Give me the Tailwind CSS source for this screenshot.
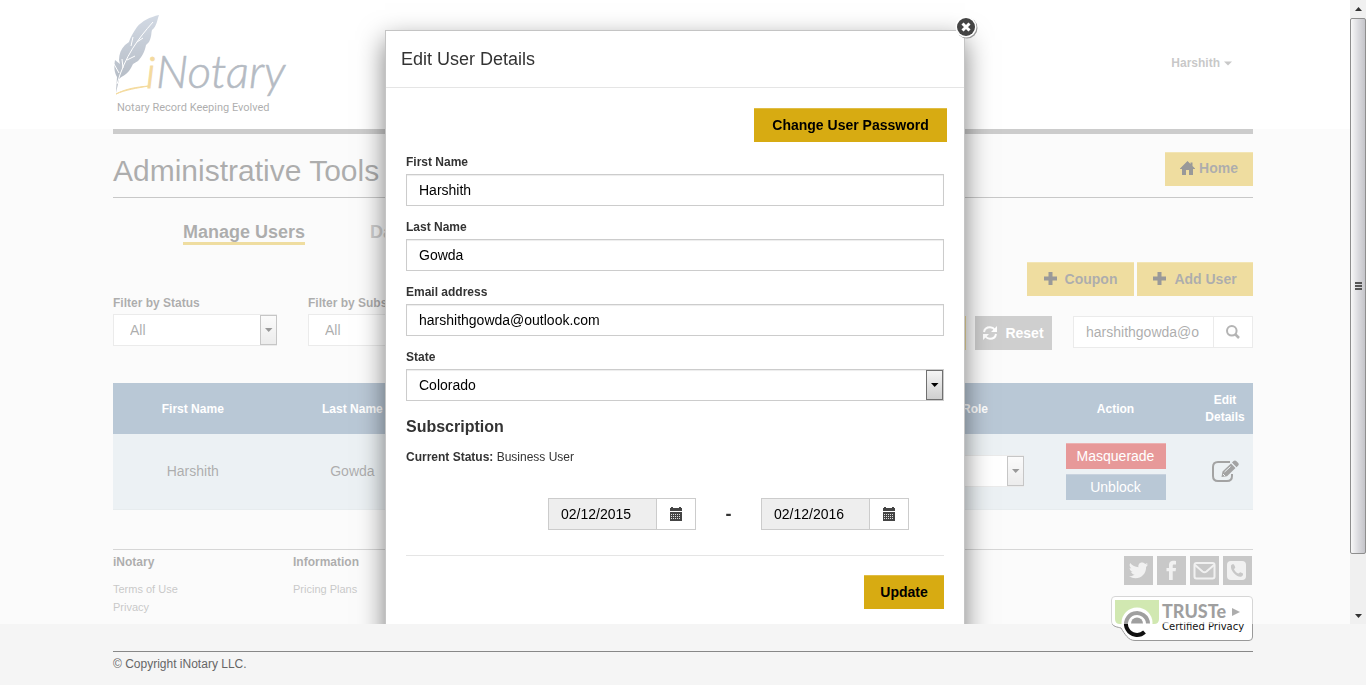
<!DOCTYPE html>
<html lang="en">
<head>
<meta charset="utf-8">
<meta name="viewport" content="width=device-width, initial-scale=1">
<title>iNotary - Administrative Tools</title>
<script src="https://cdn.jsdelivr.net/npm/@tailwindcss/browser@4"></script>
</head>
<body class="min-h-screen bg-[#f5f5f5] font-['Liberation_Sans',Arial,sans-serif] text-sm text-[#333333]">

<header class="bg-white">
  <div class="mx-auto flex h-[129px] max-w-[1140px] items-start justify-between">
    <a href="#" aria-label="iNotary" class="block">
      <svg width="176" height="120" viewBox="0 0 176 120">
        <defs>
          <linearGradient id="quill" x1="0" y1="0" x2="0" y2="1"><stop offset="0" stop-color="#8fa1bb"/><stop offset="1" stop-color="#3c4c63"/></linearGradient>
        </defs>
        <path d="M46 15C37 17 29 21 24 27C20 33 17 38 16 42L12 45C8 49 6 54 6 60L7 64L2 60C1 66 1 72 4 77L3 93L6 79C9 76 13 75 16 71C18 68 19 66 20 64L25 61C30 56 32 50 33 45L36 42C39 36 38 33 39 30C44 26 44 20 46 15Z" fill="url(#quill)"/>
        <path d="M40 22C25 39 12 56 4 84M20 37L18 46M9 59L10 68M30 38L24 42M22 56L14 60M1 64L6 73" fill="none" stroke="#fff" stroke-width="1"/>
        <path d="M3 94C12 89 23 87 36 86C24 88 12 90 3 94Z" fill="#e4a40c" stroke="#e4a40c"/>
        <text x="33" y="88" font-family="Lato, sans-serif" font-size="44" font-weight="300" font-style="italic" fill="#e4a40c" stroke="#e4a40c">i</text>
        <text x="43" y="88" font-family="Lato, sans-serif" font-size="46" font-weight="300" font-style="italic" fill="#475569" stroke="#475569" stroke-width="0.6">Notary</text>
        <text x="4" y="111" font-family="Roboto, sans-serif" font-size="11" fill="#333">Notary Record Keeping Evolved</text>
      </svg>
    </a>
    <a href="#" class="mt-[55px] mr-5 flex items-center gap-1 text-xs font-bold text-[#767676]">Harshith
      <svg width="9" height="5" viewBox="0 0 9 5"><path d="M0 0.500H8L4 4.500Z" fill="#767676"/></svg>
    </a>
  </div>
</header>

<main class="mx-auto max-w-[1140px] border-t-5 border-[#808080]">
  <div class="flex h-16 items-center justify-between border-b border-[#777777]">
    <h1 class="mt-[10px] text-3xl">Administrative Tools</h1>
    <button class="mt-[6px] flex h-[34px] w-[88px] items-center justify-center gap-1 border-t border-[#e0bd45] bg-[#d7ab12] pb-0.5 text-sm font-bold">
      <svg width="15" height="14" viewBox="0 0 15 14"><path d="M7.500 0L15 7.500V8H13V14H9V9H6V14H2V8H0V7.500ZM10.500 1.500H12.500V5H10.500Z" fill="#000"/></svg>Home
    </button>
  </div>

  <nav class="flex gap-[65px] pt-6 pl-[70px] text-lg font-bold">
    <a href="#" class="h-[23px] border-b-3 border-[#d7ab12] leading-5">Manage Users</a>
    <a href="#" class="h-[23px] leading-5 text-[#888888]">Da</a>
  </nav>

  <div class="mt-[17px] flex justify-end gap-[3px]">
    <button class="flex h-[34px] w-[107px] items-center justify-center gap-2 border-t border-[#e0bd45] bg-[#d7ab12] pb-0.5 text-sm font-bold">
      <svg width="13" height="13" viewBox="0 0 13 13"><path d="M4.500 0H8.500V4.500H13V8.500H8.500V13H4.500V8.500H0V4.500H4.500Z" fill="#000"/></svg>Coupon
    </button>
    <button class="flex h-[34px] w-[116px] items-center justify-center gap-2 border-t border-[#e0bd45] bg-[#d7ab12] pb-0.5 text-sm font-bold">
      <svg width="13" height="13" viewBox="0 0 13 13"><path d="M4.500 0H8.500V4.500H13V8.500H8.500V13H4.500V8.500H0V4.500H4.500Z" fill="#000"/></svg>Add User
    </button>
  </div>

  <form class="flex h-[54px] items-end justify-between">
    <div class="mb-1 flex gap-[31px]">
      <div class="w-[164px]">
        <label for="fstatus" class="mb-[3px] block text-xs font-bold">Filter by Status</label>
        <div class="relative">
          <select id="fstatus" class="h-8 w-full appearance-none border border-[#cccccc] bg-white pl-4 text-sm text-[#333333]"><option>All</option></select>
          <span class="pointer-events-none absolute top-px right-0 flex h-[30px] w-[17px] items-center justify-center border border-[#707070] bg-linear-to-b from-[#f5f5f5] to-[#cfcfcf]"><svg width="8" height="4" viewBox="0 0 8 4"><path d="M0 0H7.500L3.700 4Z" fill="#000"/></svg></span>
        </div>
      </div>
      <div class="w-[164px]">
        <label for="fsub" class="mb-[3px] block text-xs font-bold">Filter by Subscription</label>
        <select id="fsub" class="h-8 w-full appearance-none border border-[#cccccc] bg-white pl-4 text-sm text-[#333333]"><option>All</option></select>
      </div>
    </div>
    <div class="flex items-start">
      <button class="mr-[9px] h-[34px] w-[60px] bg-[#d7ab12]" aria-label="Filter"></button>
      <button class="mr-[21px] flex h-[34px] w-[77px] items-center justify-center gap-2 bg-[#878787] text-sm font-bold text-white">
        <svg width="14" height="14" viewBox="0 0 14 14" fill="none" stroke="#fff" stroke-width="2"><path d="M1 6C1.500 3 4 1.300 7 1.300C9 1.300 10.500 2 12 4M13 8C12.500 11 10 12.700 7 12.700C5 12.700 3.500 12 2 10"/><path d="M14 0V6H8ZM0 14V8H6Z" fill="#fff" stroke="none"/></svg>Reset
      </button>
      <div class="flex">
        <input aria-label="Search" value="harshithgowda@o" class="h-8 w-[141px] border border-[#cccccc] bg-white px-3 text-sm">
        <button type="button" aria-label="Go" class="flex h-8 w-[39px] items-center justify-center border border-l-0 border-[#cccccc] bg-white"><svg width="14" height="14" viewBox="0 0 14 14" fill="none" stroke="#444" stroke-width="2"><circle cx="5.800" cy="5.800" r="4.800"/><path d="M9 9L13 13" stroke-width="2.500"/></svg></button>
      </div>
    </div>
  </form>

  <table class="mt-[33px] w-full table-fixed border-collapse text-center">
    <colgroup><col class="w-[14%]"><col class="w-[14%]"><col><col class="w-[118px]"><col class="w-[163px]"><col class="w-14"></colgroup>
    <thead class="bg-[#527598] text-xs text-white">
      <tr class="h-[51px]"><th>First Name</th><th>Last Name</th><th></th><th>Role</th><th>Action</th><th class="leading-[17px]">Edit Details</th></tr>
    </thead>
    <tbody>
      <tr class="h-[75px] border-b border-[#c4cfd4] bg-[#cfdce3]">
        <td>Harshith</td><td>Gowda</td><td></td>
        <td class="pr-[10px]"><div class="relative">
          <select aria-label="Role" class="block h-8 w-full appearance-none border border-[#cccccc] bg-white"><option></option></select>
          <span class="pointer-events-none absolute top-px right-0 flex h-[30px] w-[17px] items-center justify-center border border-[#707070] bg-linear-to-b from-[#f5f5f5] to-[#cfcfcf]"><svg width="8" height="4" viewBox="0 0 8 4"><path d="M0 0H7.500L3.700 4Z" fill="#000"/></svg></span>
        </div></td>
        <td><div class="flex flex-col items-center gap-[5px] text-white">
          <button class="h-[26px] w-[100px] border-t border-[#cf4040] bg-[#c20200] text-sm">Masquerade</button>
          <button class="h-[26px] w-[100px] border-t border-[#7590ac] bg-[#527598] text-sm">Unblock</button>
        </div></td>
        <td><button aria-label="Edit Details" class="mx-auto block"><svg width="27" height="23" viewBox="0 0 27 23"><path d="M18 2H6C3 2 1 4 1 7V16C1 19 3 21 6 21H15C18 21 20 19 20 16V14" fill="none" stroke="#1a1a1a" stroke-width="2"/><path d="M9.500 17L10.500 11.500L19 3.500L23.500 8L15 16.300ZM20 2.500L21.500 1C22.500 0.300 23.500 0.300 24.500 1.200L26 2.700C27 3.700 27 4.700 26 5.700L24.500 7.200Z" fill="#1a1a1a"/><path d="M12.500 12L18.500 6.500M11 14L13 16" stroke="#cfdce3"/></svg></button></td>
      </tr>
    </tbody>
  </table>
</main>

<footer class="mx-auto mt-[39px] max-w-[1140px]">
  <div class="flex h-[102px] justify-between border-t border-[#999999]">
    <div class="flex pt-[3px]">
      <div class="w-[180px]">
        <h2 class="mb-[9px] text-xs leading-[18px] font-bold">iNotary</h2>
        <ul class="text-[11px] leading-[18px] text-[#767676]"><li><a href="#">Terms of Use</a></li><li><a href="#">Privacy</a></li></ul>
      </div>
      <div>
        <h2 class="mb-[9px] text-xs leading-[18px] font-bold">Information</h2>
        <ul class="text-[11px] leading-[18px] text-[#767676]"><li><a href="#">Pricing Plans</a></li></ul>
      </div>
    </div>
    <div class="flex flex-col items-end pt-[6px]">
      <div class="flex gap-1 pr-px">
        <a href="#" aria-label="Twitter" class="size-[29px] bg-[#767676]"><svg viewBox="0 0 29 29"><path d="M24 8.500C23.300 8.800 22.600 9 22 9.100C22.700 8.600 23.200 8 23.500 7.100C22.800 7.500 22 7.800 21.200 8C17.500 4.500 13.500 7.500 14.500 11.300C11.200 11.100 8.300 9.600 6.200 7.100C5 9.300 5.700 11.300 7.400 12.500C6.800 12.500 6.200 12.300 5.600 12C5.700 14 7 15.500 8.800 15.900C8.200 16.100 7.700 16.100 7.100 16C7.700 17.600 9 18.500 10.700 18.600C9 20 7 20.500 5 20.300C13.500 25.500 22.300 19.500 22.100 10.900C22.900 10.200 23.500 9.500 24 8.500Z" fill="#dddddd"/></svg></a>
        <a href="#" aria-label="Facebook" class="size-[29px] bg-[#767676]"><svg viewBox="0 0 29 29"><path d="M19 5V8.500H17C16 8.500 15.700 9 15.700 10V12H19L18.600 15.300H15.700V24H12V15.300H9.500V12H12V9.500C12 5 15 4.500 19 5Z" fill="#dddddd"/></svg></a>
        <a href="#" aria-label="Email" class="size-[29px] bg-[#767676]"><svg viewBox="0 0 29 29"><rect x="4.500" y="7" width="20" height="15.500" rx="2" fill="none" stroke="#dddddd" stroke-width="2"/><path d="M5 9L12.500 15.500C14 16.700 15 16.700 16.500 15.500L24 9" fill="none" stroke="#dddddd" stroke-width="2"/></svg></a>
        <a href="#" aria-label="Phone" class="size-[29px] bg-[#767676]"><svg viewBox="0 0 29 29"><rect x="4" y="5" width="19" height="19" rx="4" fill="#dddddd"/><path d="M8 9.500C9 8 10 8 11 8.500L12.300 11.300C12.300 12 11.500 12.500 11 13.200C12 15.300 13.500 16.700 15.500 17.600C16.300 17 16.800 16 17.500 16.200L20 17.600C20.300 19 19.500 20.400 18 20.700C14 21.500 7 15 8 9.500Z" fill="#767676"/></svg></a>
      </div>
      <a href="#" aria-label="TRUSTe Certified Privacy" class="mt-[11px] block">
        <svg width="142" height="45" viewBox="0 0 142 45">
          <path d="M4 0.500H138Q141.500 0.500 141.500 4V41Q141.500 44.500 138 44.500H24C17 44.500 14 38 10 32C7 31 0.500 31 0.500 25V4Q0.500 0.500 4 0.500Z" fill="#fff" stroke="#999"/>
          <path d="M4 4H48V23Q48 28 43 28H9Q4 28 4 23Z" fill="#8cc63e"/>
          <circle cx="26" cy="27" r="15.500" fill="#fff"/>
          <path d="M37 27.500A11 11 0 1 0 33.500 36" fill="none" stroke="#111" stroke-width="4"/>
          <path d="M20 27.500A6 6 0 0 1 32 27.500Z" fill="#111"/>
          <text x="51" y="22" font-family="Lato, sans-serif" font-weight="900" font-size="18" fill="#111">TRUSTe</text>
          <path d="M121 12L129 16L121 20Z" fill="#333"/>
          <text x="51" y="34" font-family="'DejaVu Sans', sans-serif" font-size="10" fill="#111">Certified Privacy</text>
        </svg>
      </a>
    </div>
  </div>
  <p class="border-t border-[#888888] pt-1 text-xs leading-4 text-[#666666]">© Copyright iNotary LLC.</p>
</footer>

<!-- Modal layer -->
<div class="fixed inset-x-0 top-0 bottom-[61px] flex overflow-hidden bg-white/60">
  <div class="flex flex-1 items-start justify-center pt-[30px]">
    <section role="dialog" aria-labelledby="dlg" class="relative min-h-[640px] w-[580px] border border-[#c4c4c4] bg-white shadow-[0_10px_25px_rgba(0,0,0,0.5)]">
      <button aria-label="Close" class="absolute -top-4 -right-[14px] size-6"><svg width="24" height="24" viewBox="0 0 24 24"><circle cx="13" cy="13" r="10.500" fill="#999"/><circle cx="12" cy="12" r="10.500" fill="#fff"/><circle cx="12" cy="12" r="9" fill="#444"/><path d="M8.500 8.500L15.500 15.500M15.500 8.500L8.500 15.500" stroke="#fff" stroke-width="3"/></svg></button>
      <h2 id="dlg" class="flex h-[57px] items-center border-b border-[#e5e5e5] pl-[15px] text-lg">Edit User Details</h2>
      <form class="px-5 pt-5">
        <div class="-mr-[3px] flex justify-end">
          <button type="button" class="h-[34px] w-[193px] border-t border-[#e0bd45] bg-[#d7ab12] pb-0.5 text-sm font-bold text-black">Change User Password</button>
        </div>
        <div class="mt-3 flex flex-col gap-[13px] text-xs font-bold">
          <div><label for="fn" class="mb-1 block">First Name</label><input id="fn" value="Harshith" class="block h-8 w-full border border-[#cccccc] px-3 text-sm font-normal text-black shadow-[inset_0_1px_1px_rgba(0,0,0,0.075)]"></div>
          <div><label for="ln" class="mb-1 block">Last Name</label><input id="ln" value="Gowda" class="block h-8 w-full border border-[#cccccc] px-3 text-sm font-normal text-black shadow-[inset_0_1px_1px_rgba(0,0,0,0.075)]"></div>
          <div><label for="em" class="mb-1 block">Email address</label><input id="em" value="harshithgowda@outlook.com" class="block h-8 w-full border border-[#cccccc] px-3 text-sm font-normal text-black shadow-[inset_0_1px_1px_rgba(0,0,0,0.075)]"></div>
          <div><label for="st" class="mb-1 block">State</label>
            <div class="relative"><select id="st" class="block h-8 w-full appearance-none border border-[#cccccc] bg-white px-3 text-sm font-normal text-black shadow-[inset_0_1px_1px_rgba(0,0,0,0.075)]"><option>Colorado</option></select>
            <span class="pointer-events-none absolute top-px right-px flex h-[30px] w-[17px] items-center justify-center border border-[#707070] bg-linear-to-b from-[#f5f5f5] to-[#cfcfcf]"><svg width="8" height="4" viewBox="0 0 8 4"><path d="M0 0H7.500L3.700 4Z" fill="#000"/></svg></span></div>
          </div>
        </div>
        <h3 class="mt-[14px] text-base font-bold">Subscription</h3>
        <p class="mt-[10px] text-xs"><b>Current Status:</b> Business User</p>
        <div class="mt-[33px] flex items-center justify-end pr-[35px] pb-[25px]">
          <div class="flex"><input aria-label="Start date" value="02/12/2015" readonly class="h-8 w-[109px] border border-[#cccccc] bg-[#eeeeee] px-3 text-sm text-black"><button type="button" aria-label="Pick start date" class="flex h-8 w-[39px] items-center justify-center border border-l-0 border-[#cccccc]"><svg width="14" height="14" viewBox="0 0 14 14"><path d="M1 1H2V0H4V1H10V0H12V1H13V4H1ZM1 5H13V14H1Z" fill="#444"/><path d="M2 7.500H12M2 9.500H12M2 11.500H12" stroke="#ddd" stroke-dasharray="1 1"/></svg></button></div>
          <span class="w-[65px] text-center text-lg font-bold">-</span>
          <div class="flex"><input aria-label="End date" value="02/12/2016" readonly class="h-8 w-[109px] border border-[#cccccc] bg-[#eeeeee] px-3 text-sm text-black"><button type="button" aria-label="Pick end date" class="flex h-8 w-[39px] items-center justify-center border border-l-0 border-[#cccccc]"><svg width="14" height="14" viewBox="0 0 14 14"><path d="M1 1H2V0H4V1H10V0H12V1H13V4H1ZM1 5H13V14H1Z" fill="#444"/><path d="M2 7.500H12M2 9.500H12M2 11.500H12" stroke="#ddd" stroke-dasharray="1 1"/></svg></button></div>
        </div>
        <div class="flex justify-end border-t border-[#e5e5e5] pt-[19px]">
          <button type="button" class="h-[34px] w-20 border-t border-[#e0bd45] bg-[#d7ab12] pb-0.5 text-sm font-bold text-black">Update</button>
        </div>
      </form>
    </section>
  </div>
  <div class="flex w-4 flex-col items-center bg-[#f0f0f0]" aria-hidden="true">
    <svg width="16" height="18" viewBox="0 0 16 18"><path d="M5 11L8.500 7L12 11Z" fill="#333"/></svg>
    <div class="flex w-full flex-1 flex-col items-center justify-center gap-px rounded-xs border border-[#8e8e8e] bg-linear-to-r from-[#f8f8f8] via-[#dcdce0] to-[#c4c4c9]">
      <span class="h-0.5 w-[7px] bg-[#555555]"></span><span class="h-0.5 w-[7px] bg-[#555555]"></span><span class="h-0.5 w-[7px] bg-[#555555]"></span>
    </div>
    <svg width="16" height="70" viewBox="0 0 16 70"><path d="M5 60L8.500 64L12 60Z" fill="#333"/></svg>
  </div>
</div>
</body>
</html>
